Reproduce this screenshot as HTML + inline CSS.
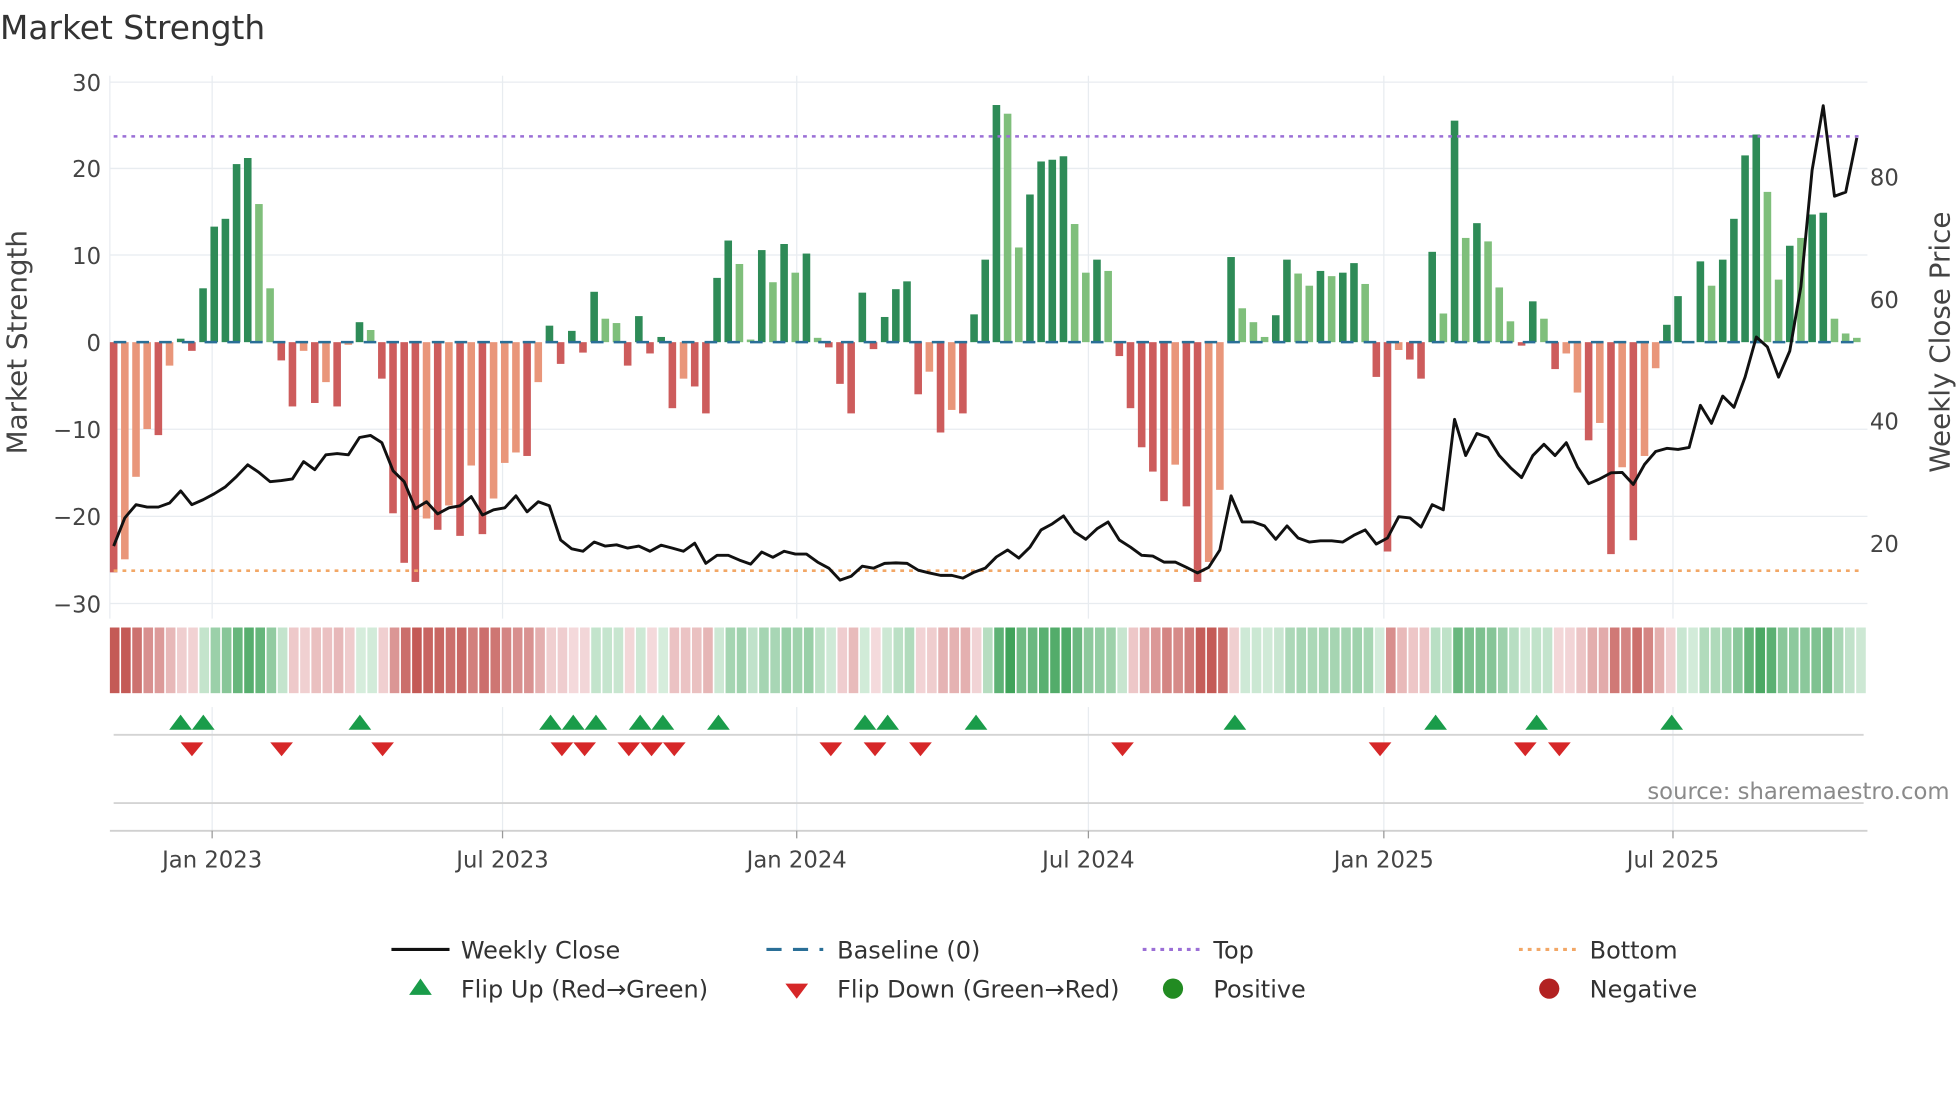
<!DOCTYPE html>
<html><head><meta charset="utf-8"><style>
html,body{margin:0;padding:0;background:#fff;}
svg{display:block;font-family:"DejaVu Sans","Liberation Sans",sans-serif;}
</style></head><body>
<svg id="s" width="1960" height="1102" viewBox="0 0 1552.3 872.8" xmlns="http://www.w3.org/2000/svg">
<rect width="1552.3" height="872.8" fill="#fff"/>
<text x="0" y="31" font-size="26" fill="#333">Market Strength</text>
<g id="grid" stroke="#e8ecf0" stroke-width="1"></g>
<g id="bars"></g>
<g id="heat"></g>
<g id="marks"></g>
<g id="fg"></g>
<g font-size="18" fill="#444">
<text x="80" y="72" text-anchor="end">30</text>
<text x="80" y="140" text-anchor="end">20</text>
<text x="80" y="209" text-anchor="end">10</text>
<text x="80" y="278" text-anchor="end">0</text>
<text x="80" y="347" text-anchor="end">−10</text>
<text x="80" y="416" text-anchor="end">−20</text>
<text x="80" y="485" text-anchor="end">−30</text>
<text x="1481" y="147">80</text>
<text x="1481" y="244">60</text>
<text x="1481" y="340">40</text>
<text x="1481" y="437">20</text>
<text x="168" y="687" text-anchor="middle">Jan 2023</text>
<text x="398" y="687" text-anchor="middle">Jul 2023</text>
<text x="631" y="687" text-anchor="middle">Jan 2024</text>
<text x="862" y="687" text-anchor="middle">Jul 2024</text>
<text x="1096" y="687" text-anchor="middle">Jan 2025</text>
<text x="1325" y="687" text-anchor="middle">Jul 2025</text>
</g>
<text transform="translate(21,271) rotate(-90)" font-size="22" fill="#444" text-anchor="middle">Market Strength</text>
<text transform="translate(1544,271) rotate(-90)" font-size="22" fill="#444" text-anchor="middle">Weekly Close Price</text>
<text x="1544" y="633" font-size="18" fill="#8a8a8a" text-anchor="end">source: sharemaestro.com</text>
<g font-size="19" fill="#333">
<line x1="310" y1="752" x2="356" y2="752" stroke="#111" stroke-width="2.5"/>
<text x="365" y="759">Weekly Close</text>
<line x1="607" y1="752" x2="652" y2="752" stroke="#2a6f97" stroke-width="2.5" stroke-dasharray="12,9"/>
<text x="663" y="759">Baseline (0)</text>
<line x1="905" y1="752" x2="950" y2="752" stroke="#9b6fd6" stroke-width="2.5" stroke-dasharray="3,4"/>
<text x="961" y="759">Top</text>
<line x1="1203" y1="752" x2="1248" y2="752" stroke="#f2a766" stroke-width="2.5" stroke-dasharray="3,4"/>
<text x="1259" y="759">Bottom</text>
<polygon points="333,775 324,788 342,788" fill="#1a9c4a"/>
<text x="365" y="790">Flip Up (Red→Green)</text>
<polygon points="622,779 640,779 631,791" fill="#d62728"/>
<text x="663" y="790">Flip Down (Green→Red)</text>
<circle cx="929" cy="783" r="8" fill="#228b22"/>
<text x="961" y="790">Positive</text>
<circle cx="1227" cy="783" r="8" fill="#b22222"/>
<text x="1259" y="790">Negative</text>
</g>
</svg>
<script>
const NS="http://www.w3.org/2000/svg";
function el(p,t,a){const e=document.createElementNS(NS,t);for(const k in a)e.setAttribute(k,a[k]);document.getElementById(p).appendChild(e);return e;}
const v=[-26.5,-25,-15.5,-10,-10.7,-2.7,0.4,-1,6.2,13.3,14.2,20.5,21.2,15.9,6.2,-2.1,-7.4,-1,-7,-4.6,-7.4,-0.3,2.3,1.4,-4.2,-19.7,-25.4,-27.6,-20.3,-21.6,-18.8,-22.3,-14.2,-22.1,-18,-13.9,-12.7,-13.1,-4.6,1.9,-2.5,1.3,-1.2,5.8,2.7,2.2,-2.7,3,-1.3,0.6,-7.6,-4.2,-5.1,-8.2,7.4,11.7,9,0.3,10.6,6.9,11.3,8,10.2,0.5,-0.6,-4.8,-8.2,5.7,-0.8,2.9,6.1,7.0,-6,-3.4,-10.4,-7.8,-8.2,3.2,9.5,
27.3,26.3,10.9,17,20.8,21,21.4,13.6,8,9.5,8.2,-1.6,-7.6,-12.1,-14.9,-18.3,-14.1,-18.9,-27.6,-25.3,-17,9.8,3.9,2.3,0.6,3.1,9.5,7.9,6.5,8.2,7.6,8.0,9.1,6.7,-4,-24.1,-0.9,-2,-4.2,10.4,3.3,25.5,12,13.7,11.6,6.3,2.4,-0.4,4.7,2.7,-3.1,-1.3,-5.8,-11.3,-9.3,-24.4,-14.4,-22.8,-13.1,-3,2,5.3,0,9.3,6.5,9.5,14.2,21.5,23.9,17.3,7.2,11.1,12,14.7,14.9,2.7,1,0.5];
const sh=("d l l l d l d d d d d d d l l d d l d l d l d l d d d d l d l d l d l l l d l d d d d d l l d d d d d l d d d d l l d l d l d l d d d d d d d d d l d l d d d "+
"d l l d d d d l l d l d d d d d l d d l l d l l l d d l l d l d d l d d l d d d l d l d l l l d d l d l l d l d l d l l d d d d l d d d d l l d l d d l l l").trim().split(/\s+/);
const X=i=>90+i*8.85, Y=val=>271-val*6.88;
[65,133.4,202,340,409,478].forEach(y=>el("grid","line",{x1:87,x2:1479,y1:y,y2:y}));
[168,398,631,862,1096,1325].forEach(x=>{el("grid","line",{x1:x,x2:x,y1:60,y2:490});el("grid","line",{x1:x,x2:x,y1:560,y2:658});});
el("grid","line",{x1:87,x2:87,y1:60,y2:490});
v.forEach((val,i)=>{const d=sh[i]!=="l";const c=val>=0?(d?"#2e8b57":"#7fbf7b"):(d?"#cd5c5c":"#e9967a");
 const y=Y(val);el("bars","rect",{x:X(i)-3,y:Math.min(y,271),width:6,height:Math.max(0.5,Math.abs(y-271)),fill:c});});
let e=v[0];
v.forEach((val,i)=>{e=e*0.4+val*0.6;const t=Math.min(1,Math.abs(e)/24);
 let a,b;if(e>=0){a=[216,238,222];b=[58,160,85];}else{a=[244,218,220];b=[196,90,86];}
 const c=a.map((q,k)=>Math.round(q+(b[k]-q)*t));
 el("heat","rect",{x:87+i*8.866,y:497,width:7.6,height:52,fill:`rgb(${c})`});});
el("fg","line",{x1:90,x2:1476,y1:108,y2:108,stroke:"#9b6fd6","stroke-width":2,"stroke-dasharray":"3,4"});
el("fg","line",{x1:90,x2:1476,y1:452,y2:452,stroke:"#f2a766","stroke-width":2,"stroke-dasharray":"3,4"});
el("fg","line",{x1:90,x2:1476,y1:271,y2:271,stroke:"#2a6f97","stroke-width":2,"stroke-dasharray":"10,8"});
const z1=[1365,1295,1262,1268,1268,1258,1228,1262,1250,1235,1218,1192,1163,1182,1205,1202,1198,1155,1175,1138,1135,1138,1095,1090,1108,1178,1205,1272,1255,1285,1270,1265,1242,1288,1275,1270,1240,1280,1255,1265,1350,1372,1378,1355,1365,1362,1370,1365,1378,1363,1370,1378,1358,1408,1388,1388,1400,1410,1380,1393,1378,1385,1385,1405,1420,1450,1440,1415,1420,1408,1407,1408,1425,1432,1438,1438,1445,1430,1420];
const z2=[1392,1375,1395,1368,1325,1310,1290,1330,1348,1322,1305,1350,1368,1388,1390,1405,1405,1418,1432,1418,1375,1240,1305,1305,1315,1348,1315,1345,1355,1352,1352,1355,1338,1325,1360,1345,1292,1295,1318,1262,1275,1050,1140,1085,1095,1140,1170,1195,1140,1112,1140,1108,1168,1210,1198,1183,1182,1212,1162,1130,1122,1125,1120,1015,1060,992,1020,945,845,870,945,880,720,430,270,495,485,350];
const zy=z1.concat(z2);let pts=zy.map((z,i)=>X(i).toFixed(1)+","+(271+(z-858)/3.14).toFixed(1)).join(" ");
el("fg","polyline",{points:pts,fill:"none",stroke:"#111","stroke-width":2.3,"stroke-linejoin":"round"});
el("marks","line",{x1:90,x2:1476,y1:582,y2:582,stroke:"#d4d4d4","stroke-width":1.5});
el("marks","line",{x1:90,x2:1476,y1:636,y2:636,stroke:"#d4d4d4","stroke-width":1.5});
el("marks","line",{x1:87,x2:1479,y1:658,y2:658,stroke:"#d0d0d0","stroke-width":1.5});
[168,398,631,862,1096,1325].forEach(x=>el("marks","line",{x1:x,x2:x,y1:658,y2:664,stroke:"#999","stroke-width":1}));
[143,161,285,436,454,472,507,525,569,685,703,773,978,1137,1217,1324].forEach(x=>el("marks","polygon",{points:`${x},566 ${x-9},578 ${x+9},578`,fill:"#1a9c4a"}));
[152,223,303,445,463,498,516,534,658,693,729,889,1093,1208,1235].forEach(x=>el("marks","polygon",{points:`${x-9},588 ${x+9},588 ${x},599`,fill:"#d62728"}));
</script>
</body></html>
